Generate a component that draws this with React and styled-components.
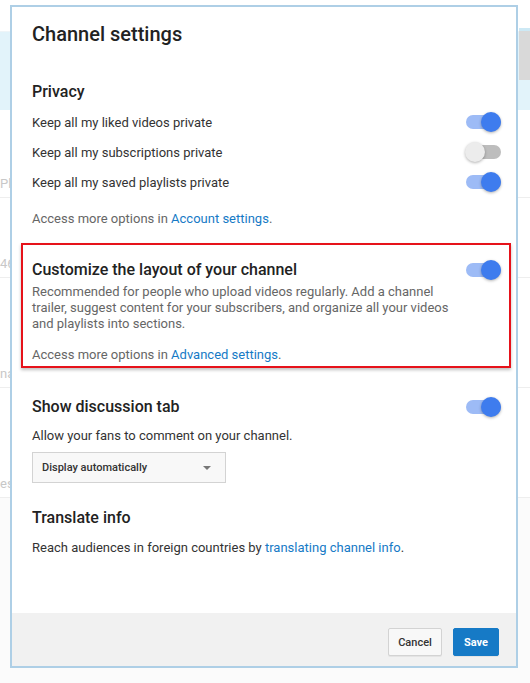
import React from "react";
import styled, { createGlobalStyle } from "styled-components";

const Global = createGlobalStyle`
  html, body { margin: 0; padding: 0; background: #fff; }
  body { font-family: Roboto, "Liberation Sans", Arial, sans-serif; }
  * { box-sizing: border-box; }
`;

const Page = styled.div`
  position: relative;
  width: 530px;
  height: 683px;
  overflow: hidden;
  background: #fbfbfb;
`;

const TopStrip = styled.div`
  height: 32px;
  background: #fff;
  border-bottom: 1px solid #eef4f7;
`;

const Band = styled.div`
  height: 78px;
  background: #e2f3fa;
`;

const GhostRow = styled.div`
  height: ${(p) => p.$h}px;
  border-bottom: 1px solid #eeeeee;
  color: #c8c8c8;
  font-size: 13px;
  display: flex;
  align-items: flex-end;
  padding-bottom: 6px;
  background: #fff;
`;

const ScrollBlock = styled.div`
  position: absolute;
  right: 0;
  top: 28px;
  width: 11px;
  height: 52px;
  background: #d9d9d9;
  border-top: 3px solid #cde9f5;
`;

const Dialog = styled.div`
  position: absolute;
  left: 10px;
  top: 5px;
  width: 508px;
  height: 663px;
  background: #fff;
  border: 2px solid #aecfe6;
  display: flex;
  flex-direction: column;
  color: #333;
`;

const Header = styled.div`
  padding: 15px 20px 0;
`;

const Title = styled.h1`
  margin: 0;
  font-size: 20px;
  line-height: 24px;
  font-weight: 500;
  color: #222;
`;

const Body = styled.div`
  padding: 0 15px 0 20px;
`;

const Section = styled.section`
  margin-top: ${(p) => p.$mt}px;
`;

const SectionHead = styled.div`
  display: flex;
  align-items: center;
  justify-content: space-between;
`;

const Heading = styled.h2`
  margin: 0;
  font-size: 16px;
  line-height: 20px;
  font-weight: 500;
  color: #222;
`;

const Highlight = styled.div`
  margin: 16px -10px 0 -11px;
  padding: 15px 8px 3px 9px;
  border: 2px solid #e6121a;
  box-shadow: 0 2px 3px rgba(0, 0, 0, 0.25);
`;

const Row = styled.div`
  height: 30px;
  display: flex;
  align-items: center;
  justify-content: space-between;
  font-size: 13px;
  color: #333;
`;

const Rows = styled.div`
  margin-top: 5px;
`;

const Text = styled.p`
  margin: ${(p) => p.$mt || 0}px 0 0;
  font-size: 13px;
  line-height: 16px;
  color: ${(p) => (p.$muted ? "#666" : "#333")};
  max-width: ${(p) => (p.$narrow ? "424px" : "none")};
`;

const Link = styled.a`
  color: #167ac6;
  text-decoration: none;
`;

const Track = styled.div`
  position: relative;
  width: 35px;
  height: 14px;
  border-radius: 7px;
  background: ${(p) => (p.$on ? "#9dbbf6" : "#bdbdbd")};
  flex-shrink: 0;
`;

const Thumb = styled.div`
  position: absolute;
  top: -3px;
  left: ${(p) => (p.$on ? "15px" : "-1px")};
  width: 20px;
  height: 20px;
  border-radius: 50%;
  background: ${(p) => (p.$on ? "#3e7cee" : "#ececec")};
  box-shadow: 0 1px 3px rgba(0, 0, 0, 0.3);
`;

const Toggle = ({ on }) => (
  <Track $on={on}>
    <Thumb $on={on} />
  </Track>
);

const Select = styled.div`
  margin-top: 8px;
  width: 194px;
  height: 31px;
  border: 1px solid #d3d3d3;
  background: #f8f8f8;
  display: flex;
  align-items: center;
  justify-content: space-between;
  padding: 0 14px 0 9px;
  font-size: 11px;
  font-weight: 500;
  color: #333;
`;

const Caret = styled.span`
  width: 0;
  height: 0;
  border-left: 4px solid transparent;
  border-right: 4px solid transparent;
  border-top: 4px solid #777;
`;

const Footer = styled.div`
  margin-top: auto;
  height: 53px;
  background: #f1f1f1;
  display: flex;
  justify-content: flex-end;
  align-items: flex-start;
  gap: 11px;
  padding: 15px 17px 0 0;
`;

const Button = styled.button`
  height: 28px;
  width: ${(p) => (p.$primary ? "46px" : "54px")};
  padding: 0;
  border-radius: 2px;
  border: 1px solid ${(p) => (p.$primary ? "#167ac6" : "#d3d3d3")};
  background: ${(p) => (p.$primary ? "#167ac6" : "#f8f8f8")};
  color: ${(p) => (p.$primary ? "#fff" : "#333")};
  font-family: Roboto, "Liberation Sans", Arial, sans-serif;
  font-size: 11px;
  font-weight: ${(p) => (p.$primary ? 700 : 500)};
  box-shadow: 0 1px 0 rgba(0, 0, 0, 0.05);
`;

const privacy = [
  { label: "Keep all my liked videos private", on: true },
  { label: "Keep all my subscriptions private", on: false },
  { label: "Keep all my saved playlists private", on: true },
];

export default function App() {
  return (
    <Page>
      <Global />
      <TopStrip />
      <Band />
      <GhostRow $h={88}>Pl</GhostRow>
      <GhostRow $h={80}>46</GhostRow>
      <GhostRow $h={110}>na</GhostRow>
      <GhostRow $h={110}>es</GhostRow>
      <ScrollBlock />
      <Dialog>
        <Header>
          <Title>Channel settings</Title>
        </Header>
        <Body>
          <Section $mt={36}>
            <Heading>Privacy</Heading>
            <Rows>
              {privacy.map((r) => (
                <Row key={r.label}>
                  <span>{r.label}</span>
                  <Toggle on={r.on} />
                </Row>
              ))}
            </Rows>
            <Text $muted $mt={14}>
              Access more options in <Link href="#">Account settings</Link>.
            </Text>
          </Section>

          <Highlight>
            <SectionHead>
              <Heading>Customize the layout of your channel</Heading>
              <Toggle on />
            </SectionHead>
            <Text $muted $narrow $mt={4}>
              Recommended for people who upload videos regularly. Add a channel
              trailer, suggest content for your subscribers, and organize all
              your videos and playlists into sections.
            </Text>
            <Text $muted $mt={15}>
              Access more options in <Link href="#">Advanced settings</Link>.
            </Text>
          </Highlight>

          <Section $mt={29}>
            <SectionHead>
              <Heading>Show discussion tab</Heading>
              <Toggle on />
            </SectionHead>
            <Text $mt={11}>Allow your fans to comment on your channel.</Text>
            <Select>
              <span>Display automatically</span>
              <Caret />
            </Select>
          </Section>

          <Section $mt={25}>
            <Heading>Translate info</Heading>
            <Text $mt={12}>
              Reach audiences in foreign countries by{" "}
              <Link href="#">translating channel info</Link>.
            </Text>
          </Section>
        </Body>
        <Footer>
          <Button>Cancel</Button>
          <Button $primary>Save</Button>
        </Footer>
      </Dialog>
    </Page>
  );
}
